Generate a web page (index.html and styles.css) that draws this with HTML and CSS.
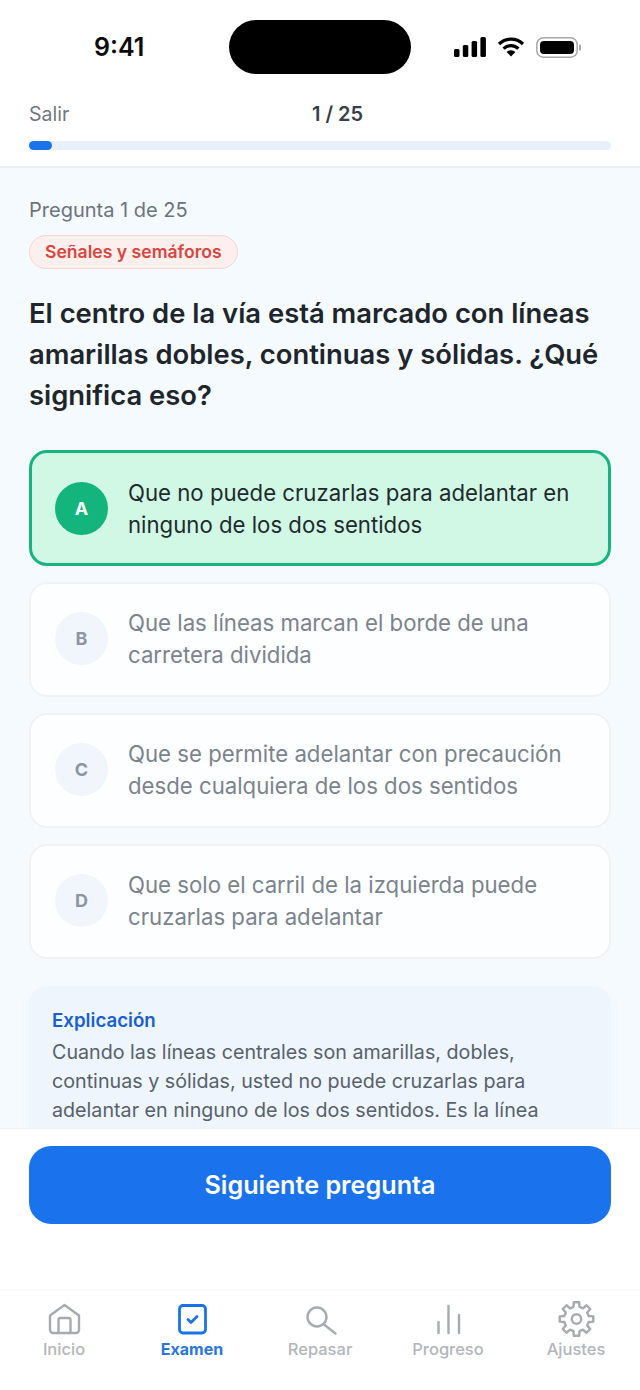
FILE: index.html
```html
<!DOCTYPE html>
<html lang="es">
<head>
    <meta charset="UTF-8">
    <title>Examen</title>
    <link rel="stylesheet" href="styles.css">
</head>
<body>
    <div class="phone">
        <header class="top">
            <div class="status-bar">
                <span class="clock">9:41</span>
                <div class="island"></div>
                <div class="status-icons">
                    <svg width="32" height="20" viewBox="0 0 32 20"><rect x="0" y="12" width="5.5" height="8" rx="1.5"/><rect x="8.8" y="8" width="5.5" height="12" rx="1.5"/><rect x="17.6" y="4" width="5.5" height="16" rx="1.5"/><rect x="26.4" y="0" width="5.5" height="20" rx="1.5"/></svg>
                    <svg width="28" height="20" viewBox="0 0 28 20"><path d="M2 7a17 17 0 0 1 24 0M6.600 11.600a10.500 10.500 0 0 1 14.800 0" fill="none" stroke="#000" stroke-width="3.200"/><path d="M14 19.500l-4.400-4.400a6.200 6.200 0 0 1 8.800 0z"/></svg>
                    <svg width="45" height="21" viewBox="0 0 45 21"><rect x="0.8" y="0.8" width="40.400" height="19.400" rx="6.500" fill="none" stroke="#a8a8a8" stroke-width="1.500"/><rect x="4" y="4" width="34" height="13" rx="4"/><rect x="43" y="7.500" width="2" height="6" rx="1" fill="#a8a8a8"/></svg>
                </div>
            </div>
            <div class="exam-bar">
                <span class="exit">Salir</span>
                <span class="counter">1 / 25</span>
            </div>
            <div class="progress"><div class="progress-fill" style="width: 4%"></div></div>
        </header>

        <main class="content">
            <p class="question-count">Pregunta 1 de 25</p>
            <span class="chip">Señales y semáforos</span>
            <h1 class="question">El centro de la vía está marcado con líneas amarillas dobles, continuas y sólidas. ¿Qué significa eso?</h1>

            <div class="options">
                <div class="option correct">
                    <span class="letter">A</span>
                    <span class="option-text">Que no puede cruzarlas para adelantar en ninguno de los dos sentidos</span>
                </div>
                <div class="option">
                    <span class="letter">B</span>
                    <span class="option-text">Que las líneas marcan el borde de una carretera dividida</span>
                </div>
                <div class="option">
                    <span class="letter">C</span>
                    <span class="option-text">Que se permite adelantar con precaución desde cualquiera de los dos sentidos</span>
                </div>
                <div class="option">
                    <span class="letter">D</span>
                    <span class="option-text">Que solo el carril de la izquierda puede cruzarlas para adelantar</span>
                </div>
            </div>

            <section class="explain">
                <h2 class="explain-title">Explicación</h2>
                <p class="explain-text">Cuando las líneas centrales son amarillas, dobles, continuas y sólidas, usted no puede cruzarlas para adelantar en ninguno de los dos sentidos. Es la línea</p>
            </section>
        </main>

        <div class="action">
            <button class="next-btn">Siguiente pregunta</button>
        </div>

        <nav class="tabs">
            <div class="tab">
                <svg viewBox="0 0 38 38"><path d="M5 15.500L19.500 5 34 15.500V30a3 3 0 0 1-3 3H8a3 3 0 0 1-3-3z"/><path d="M13.500 33V20a2 2 0 0 1 2-2h8a2 2 0 0 1 2 2v13"/></svg>
                <span>Inicio</span>
            </div>
            <div class="tab active">
                <svg viewBox="0 0 38 38"><rect x="6.500" y="5.500" width="26" height="27.500" rx="3.500"/><path d="M15 19.500l3 3 6-6"/></svg>
                <span>Examen</span>
            </div>
            <div class="tab">
                <svg viewBox="0 0 38 38"><circle cx="16" cy="17" r="9.500"/><path d="M23 24.500L34.500 33.500"/></svg>
                <span>Repasar</span>
            </div>
            <div class="tab">
                <svg viewBox="0 0 38 38"><path d="M9.500 22v11M19.500 6v27M30 15v18"/></svg>
                <span>Progreso</span>
            </div>
            <div class="tab">
                <svg viewBox="0 0 38 38"><circle cx="19.500" cy="19" r="4.700"/><path transform="translate(1.500 1)" d="M14.970 5.870L15.340 1.210H20.660L21.030 5.870L24.440 7.290L27.990 4.250L31.750 8.010L28.710 11.560L30.130 14.970L34.790 15.340V20.660L30.130 21.030L28.710 24.440L31.750 27.990L27.990 31.750L24.440 28.710L21.030 30.130L20.660 34.790H15.340L14.970 30.130L11.560 28.710L8.010 31.750L4.250 27.990L7.290 24.440L5.870 21.030L1.210 20.660V15.340L5.870 14.970L7.290 11.560L4.250 8.010L8.010 4.250L11.560 7.290z"/></svg>
                <span>Ajustes</span>
            </div>
        </nav>
    </div>
</body>
</html>
```

FILE: styles.css
```css
/* Page frame */
* {
    box-sizing: border-box;
}
body {
    margin: 0;
    background-color: #ffffff;
    font-family: Inter, "Noto Sans", sans-serif;
}
.phone {
    width: 640px;
    height: 1390px;
    display: flex;
    flex-direction: column;
    overflow: hidden;
}

/* Status bar and exam header */
.top {
    height: 168px;
    flex: none;
    padding: 20px 29px 0;
    background-color: #ffffff;
    border-bottom: 2px solid #eef1f4;
}
.status-bar {
    height: 54px;
    display: flex;
    align-items: center;
}
.clock {
    width: 183px;
    padding-left: 65px;
    font-size: 25px;
    font-weight: 600;
    color: #0b0b0b;
}
.island {
    width: 182px;
    height: 54px;
    margin-left: 17px;
    border-radius: 27px;
    background-color: #000000;
}
.status-icons {
    display: flex;
    align-items: center;
    gap: 11px;
    margin-left: 43px;
}
.exam-bar {
    height: 24px;
    margin-top: 28px;
    display: flex;
    align-items: center;
    position: relative;
}
.exit {
    font-size: 19.5px;
    color: #6f7780;
}
.counter {
    position: absolute;
    left: 283px;
    font-size: 20px;
    font-weight: 600;
    color: #373e47;
}
.progress {
    height: 9px;
    margin-top: 15px;
    border-radius: 5px;
    background-color: #e8f1fb;
}
.progress-fill {
    height: 100%;
    border-radius: 5px;
    background-color: #1a73e8;
}

/* Question area */
.content {
    flex: 1;
    min-height: 0;
    overflow: hidden;
    padding: 30px 29px 0;
    background-color: #f5fafe;
}
.question-count {
    margin: 0 0 13px;
    height: 24px;
    line-height: 24px;
    font-size: 20px;
    color: #6b747d;
}
.chip {
    display: inline-block;
    height: 34px;
    padding: 0 15px;
    line-height: 32px;
    border: 1px solid #f5d5d3;
    border-radius: 17px;
    background-color: #fcefee;
    font-size: 17.6px;
    font-weight: 600;
    color: #d8473f;
}
.question {
    margin: 24px 0 34px;
    font-size: 27.4px;
    line-height: 41px;
    font-weight: 600;
    color: #1e252c;
}
.options {
    display: flex;
    flex-direction: column;
    gap: 16px;
}
.option {
    height: 115px;
    display: flex;
    align-items: center;
    gap: 20px;
    padding: 0 24px 2px;
    border: 2px solid #f0f3f6;
    border-radius: 18px;
    background-color: #fdfeff;
}
.option.correct {
    height: 116px;
    padding: 0 23px;
    border: 3px solid #17b47e;
    background-color: #d0f8e4;
}
.letter {
    width: 53px;
    height: 53px;
    flex: none;
    display: flex;
    align-items: center;
    justify-content: center;
    border-radius: 50%;
    background-color: #f1f6fc;
    font-size: 18px;
    font-weight: 700;
    color: #8c96a1;
}
.correct .letter {
    background-color: #13b57c;
    color: #ffffff;
}
.option-text {
    font-size: 22.2px;
    line-height: 32px;
    color: #7b838c;
}
.correct .option-text {
    padding-top: 2px;
    color: #1f2a2e;
}

/* Explanation panel, runs on under the footer */
.explain {
    margin-top: 27px;
    padding: 23px 23px 40px;
    border-radius: 18px 18px 0 0;
    background-color: #eef5fd;
}
.explain-title {
    margin: 0 0 5px;
    font-size: 18.7px;
    line-height: 24px;
    font-weight: 600;
    color: #1a5fd0;
}
.explain-text {
    margin: 0;
    font-size: 19.7px;
    line-height: 29px;
    color: #58616b;
}

/* Footer button */
.action {
    height: 161px;
    flex: none;
    padding: 17px 29px 0;
    background-color: #ffffff;
    border-top: 1px solid #eef1f4;
}
.next-btn {
    width: 100%;
    height: 78px;
    border: none;
    border-radius: 22px;
    background-color: #1a73ec;
    font-family: inherit;
    font-size: 25.2px;
    font-weight: 600;
    color: #ffffff;
}

/* Bottom tabs */
.tabs {
    height: 101px;
    flex: none;
    display: grid;
    grid-template-columns: repeat(5, 128px);
    padding-top: 10px;
    background-color: #ffffff;
    border-top: 1px solid #f8f9fa;
}
.tab {
    display: flex;
    flex-direction: column;
    align-items: center;
    gap: 1px;
    font-size: 16.5px;
    line-height: 20px;
    font-weight: 500;
    color: #b2b6bb;
}
.tab svg {
    width: 38px;
    height: 38px;
    fill: none;
    stroke: #a7abb0;
    stroke-width: 2.4;
    stroke-linejoin: round;
    stroke-linecap: round;
}
.tab.active {
    font-size: 16px;
    font-weight: 700;
    color: #2b76d8;
}
.tab.active svg {
    stroke: #1a73e8;
    stroke-width: 2.8;
}
```
